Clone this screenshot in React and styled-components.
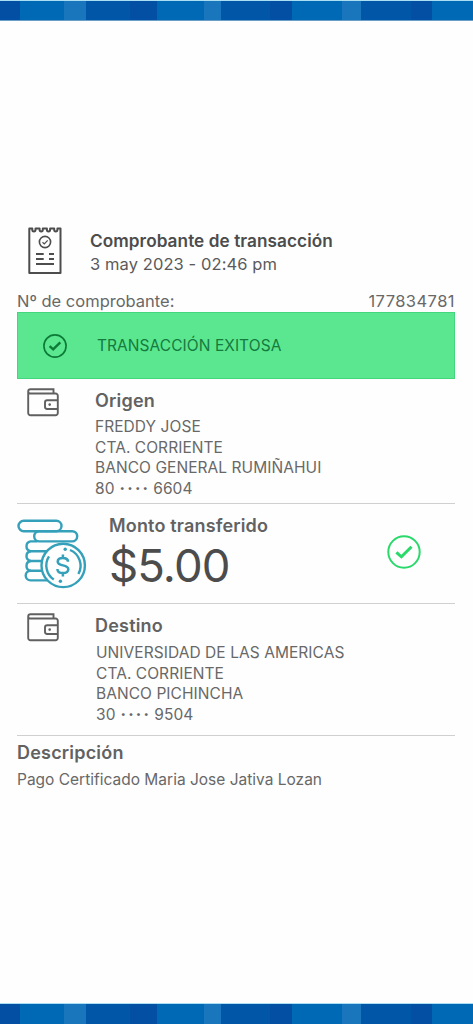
import React from 'react';
import styled, { createGlobalStyle } from 'styled-components';

const GlobalStyle = createGlobalStyle`
  * {
    box-sizing: border-box;
  }

  body {
    margin: 0;
    background-color: #fefefe;
    font-family: Inter, 'Liberation Sans', sans-serif;
  }
`;

const Page = styled.div`
  display: flex;
  flex-direction: column;
  width: 473px;
  height: 1024px;
  overflow: hidden;
`;

const Stripe = styled.div`
  display: flex;
  flex: none;
  height: 21px;
  border-top: 1px solid #a9def3;
  border-bottom: ${props => (props.$top ? '1px solid #6c9fc8' : 'none')};
`;

const StripeBlock = styled.span`
  flex: none;
  width: ${props => props.$width}px;
  background-color: ${props => props.color};
`;

const Receipt = styled.main`
  flex: 1;
  padding: 199px 18px 0 17px;
`;

const Row = styled.div`
  display: flex;
  height: ${props => props.$height}px;
  padding-top: ${props => props.$top || 0}px;
  border-bottom: ${props => (props.$divider ? '1px solid #d0d0d0' : 'none')};
`;

const IconSlot = styled.div`
  flex: none;
  width: ${props => props.$width}px;
  padding: ${props => props.$pad || '0'};

  svg {
    display: block;
  }
`;

const Heading = styled.div`
  font-size: ${props => props.$size || 18}px;
  font-weight: 600;
  line-height: 24px;
  letter-spacing: ${props => props.$spacing || 0}px;
  color: ${props => props.color || '#626262'};
  white-space: nowrap;
`;

const Text = styled.div`
  font-size: ${props => props.$size || 15.5}px;
  line-height: ${props => props.$line || 20.5}px;
  letter-spacing: ${props => props.$spacing || 0}px;
  color: ${props => props.color || '#686868'};
  white-space: nowrap;
`;

const Mask = styled.span`
  margin: 0 -1.5px 0 0.5px;
  font-weight: 800;
  letter-spacing: 2.2px;
`;

const Details = styled.div`
  padding: ${props => props.$pad};
`;

const Reference = styled(Row)`
  justify-content: space-between;
`;

const Banner = styled.div`
  display: flex;
  align-items: center;
  height: 67px;
  padding-left: 25px;
  background-color: #5ae790;
  border: 1px solid #43d67c;
`;

const BannerText = styled(Text)`
  padding-top: 1px;
`;

const Amount = styled.div`
  font-size: 45.5px;
  line-height: 56px;
  letter-spacing: -0.9px;
  color: #4c4c4c;
`;

const Status = styled.div`
  margin-left: auto;
  padding: 31px 34px 0 0;

  svg {
    display: block;
  }
`;

const stripes = [
  [20, '#034fa4'],
  [44, '#0069b5'],
  [22, '#1975bc'],
  [44, '#0256a8'],
  [27, '#034fa4'],
  [47, '#0069b5'],
  [17, '#1975bc'],
  [49, '#0256a8'],
  [22, '#034fa4'],
  [50, '#0069b5'],
  [19, '#1975bc'],
  [50, '#0256a8'],
  [21, '#034fa4'],
  [41, '#0069b5'],
];

const StripeBar = ({ top }) => (
  <Stripe $top={top}>
    {stripes.map(([width, color], i) => (
      <StripeBlock key={i} $width={width} color={color} />
    ))}
  </Stripe>
);

const ReceiptIcon = () => (
  <svg width="36" height="49" viewBox="0 0 36 49" fill="none" stroke="#4d4d4d">
    <path
      d="M2.3 47V2.4h3v1.4a1.6 1.6 0 0 0 3.2 0V2.4h4.1v1.4a1.6 1.6 0 0 0 3.2 0V2.4h4.1v1.4a1.6 1.6 0 0 0 3.2 0V2.4h4.1v1.4a1.6 1.6 0 0 0 3.2 0V2.4h3.1V47z"
      strokeWidth="2"
      strokeLinejoin="round"
    />
    <circle cx="18" cy="16" r="5.6" strokeWidth="1.6" />
    <path d="M15.5 16.2l1.8 1.7 3.4-3.6" strokeWidth="1.2" />
    <path d="M9 28h7.7M22 28h5M9 33h7.7M22 33h5M9 38h18" strokeWidth="1.8" />
  </svg>
);

const CheckIcon = ({ size, color, stroke }) => (
  <svg width={size} height={size} viewBox="0 0 34 34" fill="none" stroke={color}>
    <circle cx="17" cy="17" r="15.7" strokeWidth={stroke} />
    <path d="M9.4 17.3l5 4.5 10.1-10" strokeWidth={stroke * 1.5} />
  </svg>
);

const WalletIcon = () => (
  <svg width="32" height="29" viewBox="0 0 32 29" fill="none" stroke="#606060" strokeWidth="1.9">
    <path d="M26.5 5.5V1.2H3.5a2.3 2.3 0 0 0-2.3 2.3V25a2.3 2.3 0 0 0 2.3 2.3h25a2.3 2.3 0 0 0 2.3-2.3V7.8a2.3 2.3 0 0 0-2.3-2.3H3.2a2 2 0 0 1-2-2" />
    <path d="M30.8 12.3H20.2a2.2 2.2 0 0 0-2.2 2.2v4.3a2.2 2.2 0 0 0 2.2 2.2h10.6" />
    <circle cx="22.7" cy="16.6" r="1.3" fill="#606060" stroke="none" />
  </svg>
);

const CoinsIcon = () => (
  <svg width="70" height="70" viewBox="0 0 70 70" fill="none" stroke="#34a0ba" strokeWidth="2.4">
    <rect x="1.5" y="1.8" width="43" height="10.4" rx="5.2" />
    <rect x="17.2" y="12.2" width="43" height="10.2" rx="5.1" />
    <path d="M20 22.4h-6.5a5 5 0 0 0 0 9.8H31" />
    <path d="M14 32.2h-.5a5 5 0 0 0 0 9.8H26" />
    <path d="M14 42h-.5a5 5 0 0 0 0 9.8H26" />
    <path d="M14 51.8h-.5a4.8 4.8 0 0 0 0 9.6H30" />
    <circle cx="46.2" cy="46.4" r="21.7" fill="#fefefe" />
    <path d="M32 37.4a17 17 0 0 0 4.8 23.2" />
    <path d="M53 31a17 17 0 0 1 8.4 24" />
    <circle cx="48.2" cy="30.2" r="1.7" fill="#34a0ba" stroke="none" />
    <circle cx="43.4" cy="62.3" r="1.7" fill="#34a0ba" stroke="none" />
    <path
      d="M51 42.8c0-2.6-2.1-3.8-5.2-3.8s-5.1 1.4-5.1 3.7c0 5 10.6 2.4 10.6 7.5 0 2.5-2.2 3.8-5.4 3.8s-5.5-1.4-5.5-4.1M45.9 35.6V39M45.9 54v3.4"
      strokeWidth="2.5"
    />
  </svg>
);

const Account = ({ title, titleSpacing, lines, prefix, suffix, indent, offset }) => (
  <>
    <IconSlot $width={68} $pad="0 0 0 10px">
      <WalletIcon />
    </IconSlot>
    <Details $pad="1px 0 0 10px">
      <Heading $spacing={titleSpacing}>{title}</Heading>
      <Details $pad={`${offset}px 0 0 ${indent}px`}>
        {lines.map(line => (
          <Text key={line} $spacing={0.06}>
            {line}
          </Text>
        ))}
        <Text $spacing={0.1}>
          {prefix} <Mask>····</Mask> {suffix}
        </Text>
      </Details>
    </Details>
  </>
);

const App = () => (
  <Page>
    <GlobalStyle />
    <StripeBar top />
    <Receipt>
      <Row $height={71} $top={6}>
        <IconSlot $width={73} $pad="0 0 0 10px">
          <ReceiptIcon />
        </IconSlot>
        <Details $pad="3px 0 0">
          <Heading $size={17.2} $spacing={0.07} color="#4c4c4c">
            Comprobante de transacción
          </Heading>
          <Text $size={16.5} $line={22} $spacing={0.09} color="#5a5a5a">
            3 may 2023 - 02:46 pm
          </Text>
        </Details>
      </Row>
      <Reference $height={21}>
        <Text $size={16.5} $line={21}>Nº de comprobante:</Text>
        <Text $size={16.5} $line={21} $spacing={0.45}>177834781</Text>
      </Reference>
      <Banner>
        <IconSlot $width={54}>
          <CheckIcon size={24} color="#0d7a37" stroke={2.3} />
        </IconSlot>
        <BannerText $spacing={0.06} color="#157a3d">
          TRANSACCIÓN EXITOSA
        </BannerText>
      </Banner>
      <Row $height={125} $top={9} $divider>
        <Account
          title="Origen"
          titleSpacing={0.2}
          lines={['FREDDY JOSE', 'CTA. CORRIENTE', 'BANCO GENERAL RUMIÑAHUI']}
          prefix="80"
          suffix="6604"
          indent={0}
          offset={4}
        />
      </Row>
      <Row $height={100} $divider>
        <IconSlot $width={92} $pad="15px 0 0">
          <CoinsIcon />
        </IconSlot>
        <Details $pad="10px 0 0">
          <Heading $spacing={0.17}>Monto transferido</Heading>
          <Amount>$5.00</Amount>
        </Details>
        <Status>
          <CheckIcon size={34} color="#2bd96b" stroke={2} />
        </Status>
      </Row>
      <Row $height={132} $top={9} $divider>
        <Account
          title="Destino"
          titleSpacing={0.2}
          lines={['UNIVERSIDAD DE LAS AMERICAS', 'CTA. CORRIENTE', 'BANCO PICHINCHA']}
          prefix="30"
          suffix="9504"
          indent={1}
          offset={5}
        />
      </Row>
      <Details $pad="5px 0 0">
        <Heading $spacing={0.2}>Descripción</Heading>
        <Text $line={30}>Pago Certificado Maria Jose Jativa Lozan</Text>
      </Details>
    </Receipt>
    <StripeBar />
  </Page>
);

export default App;
